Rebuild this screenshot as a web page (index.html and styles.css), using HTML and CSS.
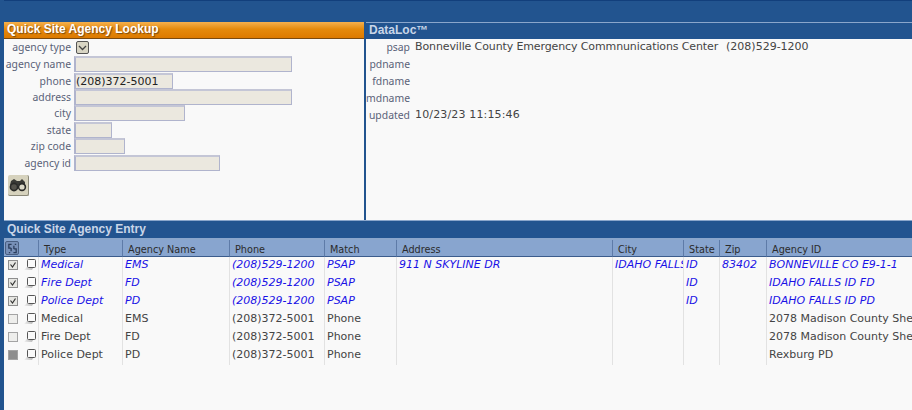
FILE: index.html
```html
<!DOCTYPE html>
<html lang="en">
  <head>
    <meta charset="UTF-8" />
    <title>Quick Site Agency</title>
    <link rel="stylesheet" href="styles.css">
  </head>
  <body>
    <svg class="defs" width="0" height="0">
      <defs>
        <linearGradient id="shade" x1="1" y1="0" x2="0" y2="1">
          <stop offset="0" stop-color="#8a8a8a"/>
          <stop offset="1" stop-color="#f4f4f4"/>
        </linearGradient>
      </defs>
      <symbol id="note" viewBox="0 0 12 12">
        <path d="M3 2 L3 9 L0 12 L8 12 L9 10 L3.5 10 Z" fill="url(#shade)"/>
        <rect x="3.5" y="1.5" width="8" height="8" rx="1" fill="#fafafa" stroke="#555"/>
      </symbol>
      <symbol id="check" viewBox="0 0 10 10">
        <rect x="0.5" y="0.5" width="9" height="9" fill="#e6e6e2" stroke="#8e8e8e"/>
        <path d="M2.5 4.5 L4.5 7 L7.5 2.5" fill="none" stroke="#333" stroke-width="1.2"/>
      </symbol>
      <symbol id="blank" viewBox="0 0 10 10">
        <rect x="0.5" y="0.5" width="9" height="9" fill="#eeeeec" stroke="#a4a4a4"/>
      </symbol>
      <symbol id="filled" viewBox="0 0 10 10">
        <rect x="0.5" y="0.5" width="9" height="9" fill="#8e8e8e" stroke="#a4a4a4"/>
      </symbol>
    </svg>

    <div class="top-bar"></div>

    <div class="split">
      <section class="lookup">
        <h2 class="head head-orange">Quick Site Agency Lookup</h2>
        <form action="#" class="lookup-form">
          <div class="row row-select">
            <label>agency type</label>
            <button type="button" class="drop">
              <svg width="9" height="6" viewBox="0 0 9 6"><path d="M1 1 L4.5 4.5 L8 1" fill="none" stroke="#444" stroke-width="1.3"/></svg>
            </button>
          </div>
          <div class="row"><label>agency name</label><input class="w-218" type="text"></div>
          <div class="row"><label>phone</label><input class="w-99" type="text" value="(208)372-5001"></div>
          <div class="row"><label>address</label><input class="w-218" type="text"></div>
          <div class="row"><label>city</label><input class="w-111" type="text"></div>
          <div class="row"><label>state</label><input class="w-38" type="text"></div>
          <div class="row"><label>zip code</label><input class="w-51" type="text"></div>
          <div class="row"><label>agency id</label><input class="w-146" type="text"></div>
          <button type="button" class="find">
            <svg width="18" height="14" viewBox="0 0 18 14">
              <path d="M2 3 L5 1 L8 3 L11 3 L13 1 L16 4 L16 7 L1 7 Z" fill="#3a3a36"/>
              <circle cx="5" cy="9" r="3.6" fill="#55534c" stroke="#2a2a28" stroke-width="1.6"/>
              <circle cx="13" cy="9" r="3.4" fill="#dcd9c8" stroke="#2a2a28" stroke-width="1.6"/>
            </svg>
          </button>
        </form>
      </section>

      <section class="dataloc">
        <h2 class="head head-blue">DataLoc™</h2>
        <div class="info">
          <div class="info-row"><span class="info-label">psap</span><span class="tight">Bonneville County Emergency Commnunications Center</span><span class="phone">(208)529-1200</span></div>
          <div class="info-row"><span class="info-label">pdname</span></div>
          <div class="info-row"><span class="info-label">fdname</span></div>
          <div class="info-row"><span class="info-label">mdname</span></div>
          <div class="info-row"><span class="info-label">updated</span><span class="stamp">10/23/23 11:15:46</span></div>
        </div>
      </section>
    </div>

    <section class="entry">
      <h2 class="head head-entry">Quick Site Agency Entry</h2>
      <table class="grid">
        <colgroup>
          <col class="c-icons"><col class="c-type"><col class="c-name"><col class="c-phone"><col class="c-match">
          <col class="c-addr"><col class="c-city"><col class="c-state"><col class="c-zip"><col class="c-id">
        </colgroup>
        <thead>
          <tr>
            <th class="icons">
              <span class="sync">
                <svg width="11" height="11" viewBox="0 0 12 12"><path d="M5 1.5 H2 V5.5 H4.5 M3.5 10.5 H2 M7 10.5 H10 V6.5 H7.5 M8.5 1.5 H10 M4.5 5.5 V9 M7.5 6.5 V3" fill="none" stroke="#2b3d5c" stroke-width="1.4"/></svg>
              </span>
            </th>
            <th>Type</th><th>Agency Name</th><th>Phone</th><th>Match</th><th>Address</th><th>City</th><th>State</th><th>Zip</th><th>Agency ID</th>
          </tr>
        </thead>
        <tbody>
          <tr class="psap">
            <td class="icons"><svg class="box"><use href="#check"/></svg><svg class="note"><use href="#note"/></svg></td>
            <td>Medical</td><td>EMS</td><td>(208)529-1200</td><td>PSAP</td><td>911 N SKYLINE DR</td><td>IDAHO FALLS</td><td>ID</td><td>83402</td><td>BONNEVILLE CO E9-1-1</td>
          </tr>
          <tr class="psap">
            <td class="icons"><svg class="box"><use href="#check"/></svg><svg class="note"><use href="#note"/></svg></td>
            <td>Fire Dept</td><td>FD</td><td>(208)529-1200</td><td>PSAP</td><td></td><td></td><td>ID</td><td></td><td>IDAHO FALLS ID FD</td>
          </tr>
          <tr class="psap">
            <td class="icons"><svg class="box"><use href="#check"/></svg><svg class="note"><use href="#note"/></svg></td>
            <td>Police Dept</td><td>PD</td><td>(208)529-1200</td><td>PSAP</td><td></td><td></td><td>ID</td><td></td><td>IDAHO FALLS ID PD</td>
          </tr>
          <tr>
            <td class="icons"><svg class="box"><use href="#blank"/></svg><svg class="note"><use href="#note"/></svg></td>
            <td>Medical</td><td>EMS</td><td>(208)372-5001</td><td>Phone</td><td></td><td></td><td></td><td></td><td>2078 Madison County Sheriff</td>
          </tr>
          <tr>
            <td class="icons"><svg class="box"><use href="#blank"/></svg><svg class="note"><use href="#note"/></svg></td>
            <td>Fire Dept</td><td>FD</td><td>(208)372-5001</td><td>Phone</td><td></td><td></td><td></td><td></td><td>2078 Madison County Sheriff</td>
          </tr>
          <tr>
            <td class="icons"><svg class="box"><use href="#filled"/></svg><svg class="note"><use href="#note"/></svg></td>
            <td>Police Dept</td><td>PD</td><td>(208)372-5001</td><td>Phone</td><td></td><td></td><td></td><td></td><td>Rexburg PD</td>
          </tr>
        </tbody>
      </table>
    </section>
  </body>
</html>
```

FILE: styles.css
```css
html,
body {
  margin: 0;
  padding: 0;
  height: 100%;
  overflow: hidden;
}
body {
  width: 912px;
  height: 410px;
  box-sizing: border-box;
  background: #f9f9f9;
  border-left: 4px solid #22548f;
  font-family: "DejaVu Sans", sans-serif;
  font-size: 11px;
  color: #444;
}
.defs {
  display: block;
  height: 0;
}
.top-bar {
  height: 21px;
  margin-left: -4px;
  background: #22548f;
  border-top: 1px solid #123f7c;
}
.split {
  display: flex;
  height: 198px;
}
.head {
  margin: 0;
  height: 17px;
  line-height: 14px;
  padding-left: 3px;
  font-family: "Liberation Sans", sans-serif;
  font-size: 12px;
  font-weight: bold;
  box-sizing: border-box;
}
.head-orange {
  color: #fff;
  background: linear-gradient(#f5b04e, #e58a0c 45%, #dd7a00);
  border-bottom: 1px solid #7a4a10;
  text-shadow: 1px 1px 1px #7a4a10;
}
.head-blue {
  color: #c9d6e8;
  background: #22548f;
  border-top: 1px solid #8aa6cb;
}
.lookup {
  width: 360px;
}
.row {
  display: flex;
  align-items: center;
  height: 16.4px;
  color: #5a6278;
}
.row label {
  width: 67px;
  text-align: right;
  margin-right: 3px;
  white-space: nowrap;
  font-family: "Noto Sans", sans-serif;
  font-size: 10.4px;
}
.row input {
  height: 16px;
  box-sizing: border-box;
  margin: 0;
  padding: 0;
  background: #ebe8df;
  border: 1px solid #b0b4cd;
  border-top-width: 2px;
  border-left-width: 2px;
  border-top-color: #c4c6d6;
  font-family: "DejaVu Sans", sans-serif;
  font-size: 11px;
  color: #222;
}
.row-select {
  height: 17px;
  padding-bottom: 2px;
  box-sizing: border-box;
}
.drop {
  width: 13px;
  height: 13px;
  padding: 0;
  margin: 2px 0 0 2px;
  background: #d8d5c4;
  border: 1px solid #555;
  border-radius: 2px;
  display: flex;
  align-items: center;
  justify-content: center;
}
.w-218 { width: 218px; }
.w-99 { width: 99px; }
.w-111 { width: 111px; }
.w-38 { width: 38px; }
.w-51 { width: 51px; }
.w-146 { width: 146px; }
.find {
  display: flex;
  align-items: center;
  justify-content: center;
  width: 21px;
  height: 21px;
  padding: 0;
  margin: 4px 0 0 4px;
  background: #d6d2bd;
  border: 0;
  border-right: 1px solid #8a8878;
  border-bottom: 1px solid #8a8878;
  border-radius: 2px;
}
.dataloc {
  flex: 1;
  border-left: 2px solid #22548f;
}
.info-row {
  display: flex;
  align-items: flex-start;
  height: 17px;
  line-height: 16px;
}
.info-label {
  width: 44px;
  margin-right: 5px;
  text-align: right;
  color: #5a6278;
  font-family: "Noto Sans", sans-serif;
  font-size: 10.4px;
}
.tight {
  letter-spacing: -0.12px;
}
.phone {
  margin-left: 8px;
}
.stamp {
  letter-spacing: 0.15px;
}
.head-entry {
  height: 20px;
  line-height: 16px;
  color: #c9d6e8;
  background: #22548f;
  border-top: 1px solid #8aa6cb;
  border-bottom: 2px solid #8aa6cb;
}
.grid {
  table-layout: fixed;
  width: 908px;
  border-collapse: separate;
  border-spacing: 0;
}
.c-icons { width: 34px; }
.c-type { width: 84px; }
.c-name { width: 107px; }
.c-phone { width: 95px; }
.c-match { width: 72px; }
.c-addr { width: 216px; }
.c-city { width: 71px; }
.c-state { width: 36px; }
.c-zip { width: 47px; }
.c-id { width: 146px; }
.grid th {
  height: 17px;
  padding: 2px 0 0 5px;
  box-sizing: border-box;
  background: #88a5cf;
  border-bottom: 1px solid #3b5c8c;
  border-left: 1px solid #5e7ba8;
  font-size: 9.7px;
  line-height: 13px;
  font-weight: normal;
  text-align: left;
  color: #2b2b2b;
  white-space: nowrap;
  overflow: hidden;
}
.grid td {
  height: 18px;
  padding: 1px 0 0 2px;
  box-sizing: border-box;
  border-left: 1px solid #e2e2e2;
  line-height: 14px;
  vertical-align: top;
  white-space: nowrap;
  overflow: hidden;
  color: #444;
}
.grid th.icons,
.grid td.icons {
  border-left: 0;
  padding: 0;
}
.grid td.icons {
  line-height: 0;
}
.psap td {
  color: #1a12e6;
  font-style: italic;
}
.box {
  width: 10px;
  height: 10px;
  margin: 3px 6px 0 4px;
  vertical-align: top;
}
.note {
  width: 12px;
  height: 12px;
  margin-top: 1px;
  vertical-align: top;
}
.sync {
  display: flex;
  align-items: center;
  justify-content: center;
  width: 12px;
  height: 12px;
  margin-left: 1px;
  background: #7890b8;
  border: 1px solid #4a5f82;
  border-radius: 2px;
}
```
